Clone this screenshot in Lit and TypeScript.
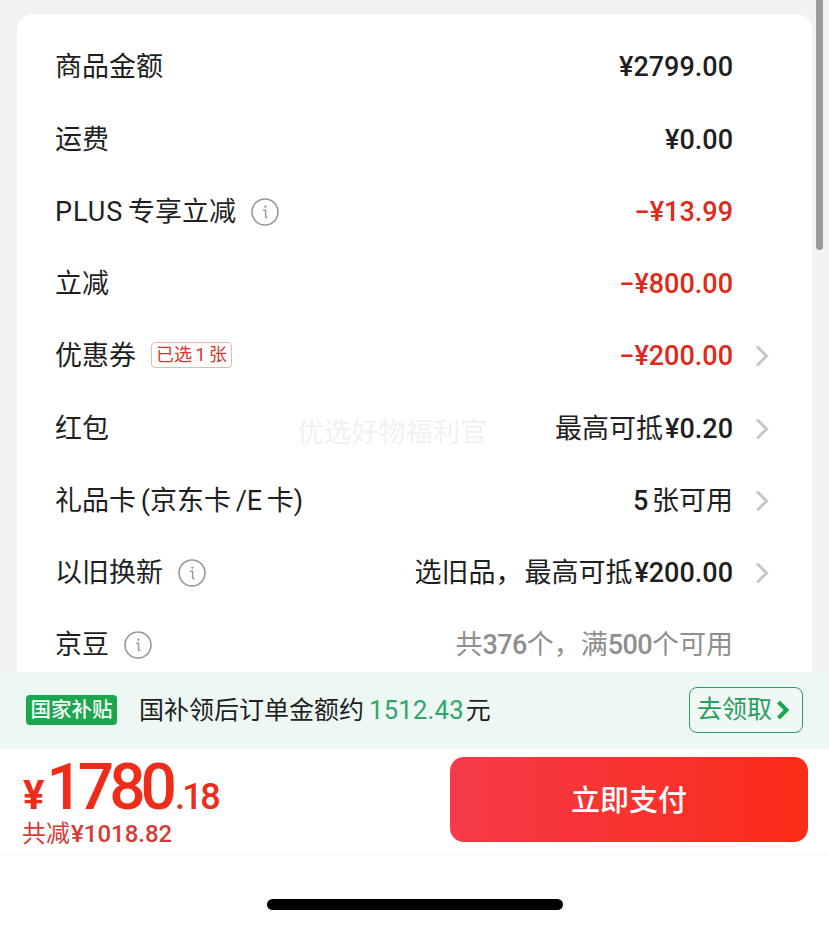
import { LitElement, html, css, nothing } from 'lit';
import { customElement } from 'lit/decorators.js';

interface Row {
  label: unknown;
  info?: boolean;
  badge?: string;
  value: unknown;
  tone?: string;
  more?: boolean;
}

const num = (s: string) => html`<span class="num">${s}</span>`;
// the yen sign sits a little apart from the chinese text before it
const yen = (s: string) => html`<span class="num after">${s}</span>`;

const ROWS: Row[] = [
  { label: '商品金额', value: num('¥2799.00') },
  { label: '运费', value: num('¥0.00') },
  { label: html`<span class="latin">PLUS</span> 专享立减`, info: true, value: num('−¥13.99'), tone: 'red' },
  { label: '立减', value: num('−¥800.00'), tone: 'red' },
  { label: '优惠券', badge: '已选 1 张', value: num('−¥200.00'), tone: 'red', more: true },
  { label: '红包', value: html`最高可抵${yen('¥0.20')}`, more: true },
  { label: '礼品卡 (京东卡 /E 卡)', value: html`${num('5')} 张可用`, more: true },
  { label: '以旧换新', info: true, value: html`选旧品<span class="comma">，</span>最高可抵${yen('¥200.00')}`, more: true },
  { label: '京豆', info: true, value: html`共${num('376')}个，满${num('500')}个可用`, tone: 'grey' },
];

const infoIcon = html`<svg class="info" viewBox="0 0 28 28" fill="none" stroke="#979797">
  <circle cx="14" cy="14" r="13" stroke-width="1.6"></circle>
  <circle cx="14.4" cy="8.6" r="1.2" fill="#979797" stroke="none"></circle>
  <path d="M12.6 12.2h2v6.6c0 .8.5 1 1.3.7" stroke-width="1.4" stroke-linecap="round"></path>
</svg>`;

const chevron = html`<svg class="chev" viewBox="0 0 14 22" fill="none" stroke="#c6c6c6" stroke-width="3">
  <path d="M2 1.5 11.5 11 2 20.5"></path>
</svg>`;

@customElement('app-root')
export class AppRoot extends LitElement {
  static styles = css`
    :host {
      display: block;
      width: 829px;
      height: 927px;
      overflow: hidden;
      position: relative;
      background: #fff;
      color: #1f1f1f;
      font-family: Roboto, "Noto Sans CJK SC", sans-serif;
      line-height: 36px;
    }
    .scroll {
      height: 672px;
      box-sizing: border-box;
      padding: 14px 17px 0;
      background: #f2f2f2;
      overflow: hidden;
    }
    .card {
      height: 100%;
      box-sizing: border-box;
      padding: 17.2px 43px 0 38px;
      background: #fff;
      border-radius: 16px 16px 0 0;
    }
    .row {
      display: flex;
      align-items: center;
      height: 72.25px;
      font-size: 27px;
    }
    .label {
      display: flex;
      align-items: center;
      flex: none;
      word-spacing: -2px;
    }
    .latin {
      letter-spacing: 1px;
    }
    .info {
      width: 28px;
      height: 28px;
      margin-left: 15px;
    }
    .badge {
      margin: 0 0 2px 15px;
      height: 24px;
      padding: 0 4px;
      display: flex;
      align-items: center;
      border: 1px solid #f0b4ae;
      border-radius: 4px;
      font-size: 18px;
      line-height: 24px;
      color: #d8352c;
      word-spacing: -1px;
    }
    .value {
      margin-left: auto;
      word-spacing: -3px;
    }
    .num {
      font-weight: 500;
    }
    .after {
      margin-left: 2px;
    }
    .comma {
      margin-right: 2px;
    }
    .red {
      color: #e0291c;
    }
    .grey {
      color: #8f8f8f;
    }
    .grey .num {
      letter-spacing: -0.6px;
    }
    .slot {
      width: 36px;
      flex: none;
      display: flex;
      justify-content: flex-end;
    }
    .chev {
      width: 14px;
      height: 22px;
    }
    .watermark {
      position: absolute;
      left: 297px;
      top: 415px;
      font-size: 27px;
      letter-spacing: 0.2px;
      color: rgba(190, 190, 190, 0.22);
    }
    .scrollbar {
      position: absolute;
      left: 816px;
      top: 0;
      width: 7px;
      height: 250px;
      border-radius: 0 0 4px 4px;
      background: #9b9b9b;
    }
    .subsidy {
      height: 77px;
      box-sizing: border-box;
      padding: 0 26px 1px;
      display: flex;
      align-items: center;
      background: #edf7f3;
      font-size: 25px;
    }
    .tag {
      width: 91px;
      height: 30px;
      line-height: 30px;
      text-align: center;
      border-radius: 4px;
      background: #1ca64f;
      color: #f2fff6;
      font-size: 20.5px;
      font-weight: 500;
    }
    .note {
      margin-left: 22px;
    }
    .amount {
      color: #2ba768;
      font-size: 25.5px;
      letter-spacing: 0.3px;
      margin: 0 2px 0 5px;
    }
    .claim {
      margin-left: auto;
      width: 114px;
      height: 46px;
      box-sizing: border-box;
      padding-left: 7px;
      display: flex;
      align-items: center;
      gap: 4px;
      border: 1.5px solid #2c9f62;
      border-radius: 8px;
      color: #2a9d5e;
      background: #f0f8f5;
    }
    .claim svg {
      width: 14px;
      height: 22px;
    }
    .pay {
      height: 106px;
      box-sizing: border-box;
      padding: 8px 21px 12px 23px;
      display: flex;
      justify-content: space-between;
      border-bottom: 1px solid #f6f6f6;
    }
    .total {
      color: #ee2c1a;
      display: flex;
      flex-direction: column;
    }
    .price {
      display: flex;
      align-items: baseline;
      height: 61px;
      line-height: 61px;
      font-weight: 500;
    }
    .cny {
      font-size: 40px;
      margin-right: 2px;
      font-weight: 700;
    }
    .int {
      font-size: 64px;
      letter-spacing: -5px;
    }
    .dec {
      font-size: 36px;
      letter-spacing: -2.6px;
      margin-left: 3px;
    }
    .saved {
      font-size: 24px;
      line-height: 32px;
      color: #d83a34;
      margin-left: -1px;
    }
    .saved span {
      font-weight: 500;
      margin-left: 1px;
    }
    .button {
      width: 358px;
      height: 85px;
      box-sizing: border-box;
      padding-top: 3px;
      line-height: 82px;
      text-align: center;
      border-radius: 14px;
      background: linear-gradient(90deg, #f63a48, #fa2c19);
      color: #fff;
      font-size: 29px;
      font-weight: 500;
    }
    .home {
      height: 72px;
      display: flex;
      justify-content: center;
      padding-top: 44px;
      box-sizing: border-box;
    }
    .home i {
      width: 296px;
      height: 11px;
      border-radius: 6px;
      background: #000;
      margin-left: 1px;
    }
  `;

  render() {
    return html`
      <div class="scroll">
        <div class="card">
          ${ROWS.map(
            (r) => html`
              <div class="row">
                <div class="label">
                  <span>${r.label}</span>
                  ${r.info ? infoIcon : nothing}
                  ${r.badge ? html`<span class="badge">${r.badge}</span>` : nothing}
                </div>
                <div class="value ${r.tone ?? ''}">${r.value}</div>
                <div class="slot">${r.more ? chevron : nothing}</div>
              </div>
            `
          )}
        </div>
      </div>
      <div class="watermark">优选好物福利官</div>
      <div class="scrollbar"></div>
      <div class="subsidy">
        <span class="tag">国家补贴</span>
        <span class="note">国补领后订单金额约<span class="amount">1512.43</span>元</span>
        <div class="claim">
          <span>去领取</span>
          <svg viewBox="0 0 14 22" fill="none" stroke="#1ca64f" stroke-width="4">
            <path d="M2.5 3 10.5 11 2.5 19"></path>
          </svg>
        </div>
      </div>
      <div class="pay">
        <div class="total">
          <div class="price">
            <span class="cny">¥</span><span class="int">1780</span><span class="dec">.18</span>
          </div>
          <div class="saved">共减<span>¥1018.82</span></div>
        </div>
        <div class="button">立即支付</div>
      </div>
      <div class="home"><i></i></div>
    `;
  }
}
